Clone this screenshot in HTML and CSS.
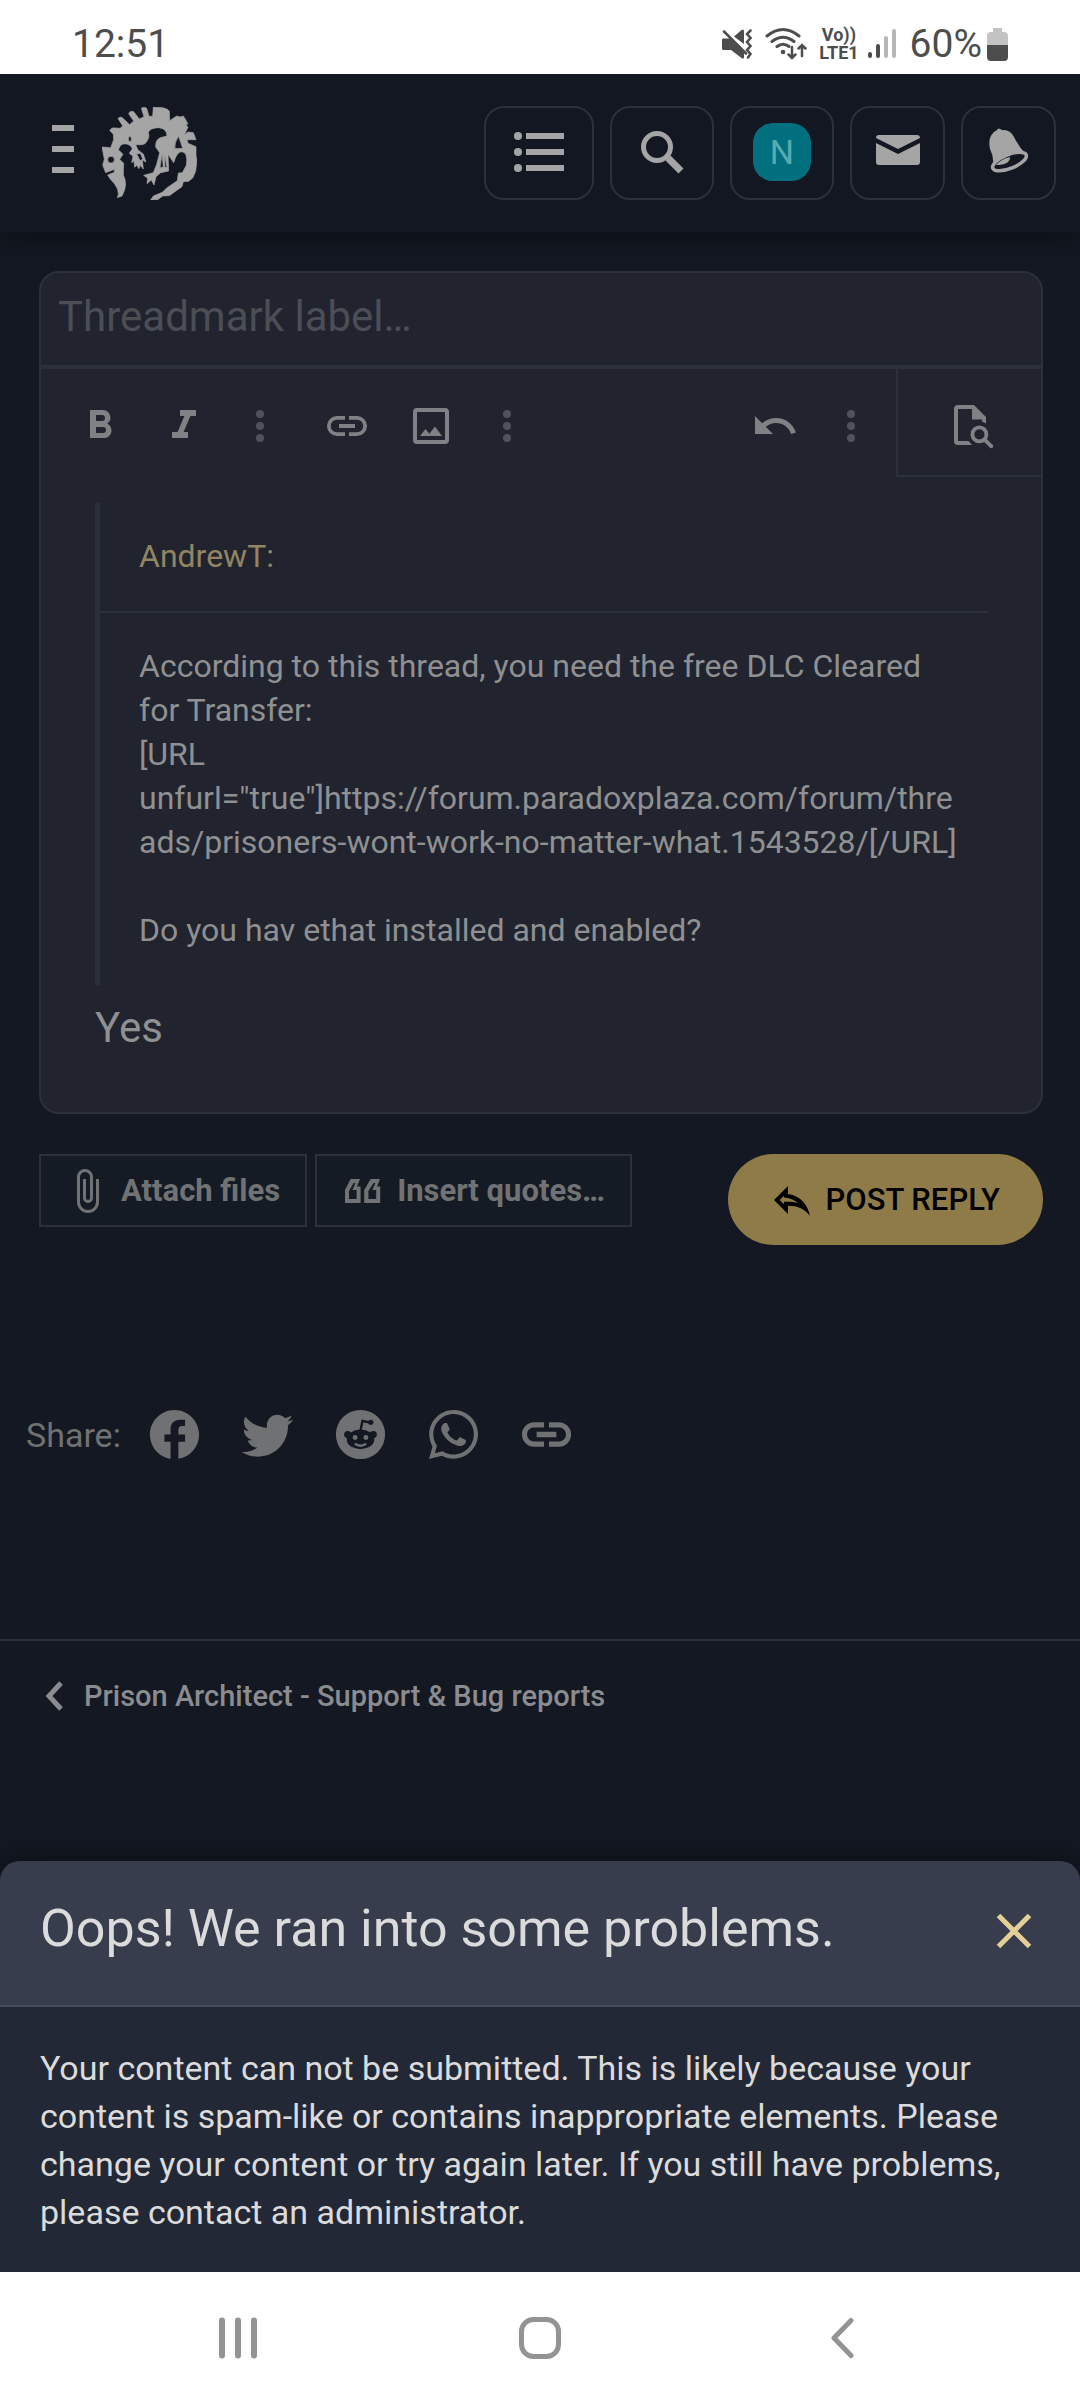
FILE: index.html
```html
<!DOCTYPE html>
<html lang="en">
<head>
<meta charset="utf-8">
<meta name="viewport" content="width=device-width">
<title>Prison Architect - Support &amp; Bug reports</title>
<link rel="stylesheet" href="styles.css">
</head>
<body>
<div class="statusbar">
  <span class="clock">12:51</span>
  <div class="status-icons">
    <svg class="si-mute" width="30" height="32" viewBox="0 0 30 32"><path fill="currentColor" d="M1 10.500H8L22 24V29Q22 32 19.500 30L9 22H1Q0 22 0 20V12Q0 10.500 1 10.500ZM12 8.500 19.500 2Q22 0.500 22 3V16Z"/><path d="M2 3.500 24 25.500M28.500 2.500 25 6 28.500 10 25 14 28.500 18 25 22 28.500 26 26 29.500" stroke="currentColor" fill="none" stroke-width="2.500" stroke-linecap="round"/></svg>
    <svg class="si-wifi" width="43" height="34" viewBox="0 0 43 34"><g fill="none" stroke="currentColor" stroke-width="3" stroke-linecap="round"><path d="M2 9Q18 -4 34 9M7 14.500Q18 6 29 14.500M12 19.500Q18 15 24 19.500"/><path d="M27 20V31M23.500 27.500 27 31 30.500 27.500M37 29V18M33.500 21.500 37 18 40.500 21.500" stroke-width="2.500"/></g><circle cx="18" cy="25" r="2.300" fill="currentColor"/></svg>
    <span class="lte"><span>Vo))</span><span>LTE1</span></span>
    <svg class="si-signal" width="28" height="30" viewBox="0 0 28 30"><g stroke="currentColor" stroke-width="4" stroke-linecap="round"><path d="M2 25V27M10 17V27"/><path d="M18 9V27M26 2V27" opacity=".4"/></g></svg>
    <span class="percent">60%</span>
    <svg class="si-battery" width="21" height="33" viewBox="0 0 21 33"><path d="M6 0H15V4H17Q21 4 21 8V17H0V8Q0 4 4 4H6Z" fill="#c3c3c3"/><path d="M0 17H21V29Q21 33 17 33H4Q0 33 0 29Z" fill="currentColor"/></svg>
  </div>
</div>

<header class="header">
  <button class="menu" aria-label="Menu"><svg width="22" height="48" viewBox="0 0 22 48"><path fill="currentColor" d="M0 0H22V6H0ZM0 21H22V27H0ZM0 42H22V48H0Z"/></svg></button>
  <a class="logo" href="#" aria-label="Home"><svg width="95" height="93" viewBox="36 33 285 279"><path fill="currentColor" fill-rule="evenodd" stroke="currentColor" stroke-width="2" stroke-linejoin="round" d="M190 33 218 35Q236 39 238 46L239 74 260 60 270 63 280 60 285 68 294 84 287 86 294 94 283 116 294 108 310 110 318 131 291 131 294 142 318 152V180L321 192 317 226 308 246 296 256 280 257 276 272 238 299 218 300 203 311 182 312 190 300 217 289 230 276 262 254 265 231 277 230 289 208Q295 166 273 167 260 169 251 200L234 175 236 225 212 230 198 242 192 267 184 252 171 263 173 247 161 238 190 230 200 205 209 170 197 153Q196 128 215 124L231 120Q230 96 205 95 178 96 175 110 181 126 165 143 155 148 137 146L144 162 160 174 168 198 157 192 160 219 150 208 147 218 140 208 134 214 132 195 125 200 129 181 118 172 127 158 122 150Q104 137 91 149L85 161 99 175 89 190 101 202 100 237Q115 265 96 300L82 305Q94 282 60 248L53 237 73 229 73 220 47 230 38 207 43 190 36 153 62 155 71 131 70 115 59 103Q65 93 76 96L91 97 98 89 84 68Q90 59 98 66L119 86 131 75 116 53Q120 43 131 47L148 69 162 62 154 37Q162 31 170 37L177 61 188 61ZM63 181A10 10 0 1 0 63 201A10 10 0 1 0 63 181ZM120 120Q113 123 116 134L122 138Q127 126 120 120ZM266 121 278 157 255 158Q252 140 266 121ZM140 174 151 172 158 188 151 195ZM216 174 220 213 210 215ZM224 176 231 215 225 214Z"/></svg></a>
  <nav class="tools">
    <button class="tool wide" aria-label="Navigation"><svg width="50" height="40" viewBox="0 0 50 40"><g fill="currentColor"><circle cx="4" cy="4" r="4"/><circle cx="4" cy="20" r="4"/><circle cx="4" cy="36" r="4"/><path d="M12 1H50V7H12ZM12 17H50V23H12ZM12 33H50V39H12Z"/></g></svg></button>
    <button class="tool mid" aria-label="Search"><svg width="44" height="44" viewBox="0 0 44 44"><g fill="none" stroke="currentColor"><circle cx="17" cy="17" r="13.500" stroke-width="5"/><path d="M28 28 41 41" stroke-width="7"/></g></svg></button>
    <button class="tool mid" aria-label="Account"><span class="avatar">N</span></button>
    <button class="tool" aria-label="Inbox"><svg width="44" height="30" viewBox="0 0 44 30"><path fill="currentColor" d="M0 3Q0 0 3 0H41Q44 0 44 3L22 14ZM0 8 22 19 44 8V27Q44 30 41 30H3Q0 30 0 27Z"/></svg></button>
    <button class="tool" aria-label="Alerts"><svg width="42" height="46" viewBox="0 0 42 46"><path fill="currentColor" d="M9 3Q10 0 14 3 22 2 26 10 31 20 37 26L24 28Q11 32 5 37 6 30 2 22-1 8 9 3Z"/><ellipse cx="21.500" cy="34.500" rx="18" ry="7" transform="rotate(-22 21.500 34.500)" fill="#131722" stroke="currentColor" stroke-width="3.500"/><path fill="currentColor" d="M8 38Q13 32 22 30 22 38 8 38Z"/></svg></button>
  </nav>
</header>

<main class="page">
  <form class="reply">
    <div class="editor">
      <input class="threadmark" type="text" placeholder="Threadmark label…" aria-label="Threadmark label">
      <div class="toolbar">
        <button type="button" class="tb" aria-label="Bold"><svg viewBox="0 0 24 24"><path d="M13.500 15.500H10V12.500H13.500A1.500 1.500 0 0 1 15 14A1.500 1.500 0 0 1 13.500 15.500M10 6.500H13A1.500 1.500 0 0 1 14.500 8A1.500 1.500 0 0 1 13 9.500H10M15.600 10.790C16.570 10.110 17.250 9 17.250 8C17.250 5.740 15.500 4 13.250 4H7V18H14.040C16.140 18 17.750 16.300 17.750 14.210C17.750 12.690 16.890 11.390 15.600 10.790Z"/></svg></button>
        <button type="button" class="tb" aria-label="Italic"><svg viewBox="0 0 24 24"><path d="M10 4V7H12.210L8.790 15H6V18H14V15H11.790L15.210 7H18V4Z"/></svg></button>
        <button type="button" class="tb more" aria-label="More text"><svg viewBox="0 0 24 24"><circle cx="12" cy="6" r="2"/><circle cx="12" cy="12" r="2"/><circle cx="12" cy="18" r="2"/></svg></button>
        <button type="button" class="tb group" aria-label="Insert link"><svg viewBox="0 0 24 24"><path d="M3.900 12C3.900 10.290 5.290 8.900 7 8.900H11V7H7A5 5 0 0 0 7 17H11V15.100H7C5.290 15.100 3.900 13.710 3.900 12M8 13H16V11H8V13M17 7H13V8.900H17C18.710 8.900 20.100 10.290 20.100 12S18.710 15.100 17 15.100H13V17H17A5 5 0 0 0 17 7Z"/></svg></button>
        <button type="button" class="tb" aria-label="Insert image"><svg viewBox="0 0 24 24"><path d="M19 19H5V5H19M19 3H5A2 2 0 0 0 3 5V19A2 2 0 0 0 5 21H19A2 2 0 0 0 21 19V5A2 2 0 0 0 19 3M13.960 12.290L11.210 15.830L9.250 13.470L6.500 17H17.500L13.960 12.290Z"/></svg></button>
        <button type="button" class="tb more" aria-label="More rich"><svg viewBox="0 0 24 24"><circle cx="12" cy="6" r="2"/><circle cx="12" cy="12" r="2"/><circle cx="12" cy="18" r="2"/></svg></button>
        <button type="button" class="tb undo" aria-label="Undo"><svg viewBox="0 0 24 24"><path d="M12.500 8C9.850 8 7.450 9 5.600 10.600L2 7V16H11L7.380 12.380C8.770 11.220 10.540 10.500 12.500 10.500C16.040 10.500 19.050 12.810 20.100 16L22.470 15.220C21.080 11.030 17.150 8 12.500 8Z"/></svg></button>
        <button type="button" class="tb more" aria-label="More misc"><svg viewBox="0 0 24 24"><circle cx="12" cy="6" r="2"/><circle cx="12" cy="12" r="2"/><circle cx="12" cy="18" r="2"/></svg></button>
        <button type="button" class="preview" aria-label="Preview"><svg viewBox="0 0 24 24"><path d="M6 2A2 2 0 0 0 4 4V20A2 2 0 0 0 6 22H13L11.300 20H6V4H13V9.200H18V10.200L20 11.200V8L14 2Z"/><circle cx="16.700" cy="16.700" r="3.500" fill="none" stroke="currentColor" stroke-width="1.900"/><path d="M19.300 19.300 22.600 22.600" stroke="currentColor" stroke-width="2" stroke-linecap="round"/></svg></button>
      </div>
      <div class="content" contenteditable="true">
        <blockquote class="quote">
          <div class="quote-title">AndrewT:</div>
          <div class="quote-body">According to this thread, you need the free DLC Cleared for Transfer:<br>[URL unfurl="true"]https://forum.paradoxplaza.com/forum/threads/prisoners-wont-work-no-matter-what.1543528/[/URL]<br><br>Do you hav ethat installed and enabled?</div>
        </blockquote>
        <p class="typed">Yes</p>
      </div>
    </div>
    <div class="actions">
      <button type="button" class="btn"><svg viewBox="0 0 24 24"><path d="M16.500 6V17.500A4 4 0 0 1 8.500 17.500V5A2.500 2.500 0 0 1 13.500 5V15.500A1 1 0 0 1 11.500 15.500V6H10V15.500A2.500 2.500 0 0 0 15 15.500V5A4 4 0 0 0 7 5V17.500A5.500 5.500 0 0 0 18 17.500V6Z"/></svg>Attach files</button>
      <button type="button" class="btn"><svg viewBox="0 0 24 24"><path fill-rule="evenodd" d="M5.800 6H10.500L9 9.800H10.800V18H3V11.500ZM7.300 8 5 12V16H8.800V11.500H6.700L8.200 8ZM15.800 6H20.500L19 9.800H20.600V18H12.600V11.500ZM17.300 8 14.700 12V16H18.600V11.500H16.700L18.200 8Z"/></svg>Insert quotes…</button>
      <button type="submit" class="post"><svg viewBox="0 0 24 24"><path fill-rule="evenodd" d="M10 5V9C17 10 20 15 21 20C18.500 16.500 15 14.900 10 14.900V19L3 12L10 5M8 9.830L5.830 12L8 14.170V12.900H10C11.800 12.900 13.400 13.100 14.900 13.600C13.500 12.200 11.600 11.300 9 10.900L8 10.700V9.830"/></svg>POST REPLY</button>
    </div>
  </form>

  <div class="share">
    <span class="share-label">Share:</span>
    <a href="#" aria-label="Facebook"><svg viewBox="0 0 24 24"><path d="M12 2C6.500 2 2 6.500 2 12C2 17 5.660 21.200 10.400 21.900V14.900H7.900V12H10.400V9.850C10.400 7.340 11.930 5.960 14.220 5.960H16.300V8.500H15.190C13.950 8.500 13.560 9.390 13.560 10.180V12H16.300V14.900H13.560V21.900A10 10 0 0 0 22 12C22 6.500 17.500 2 12 2Z"/></svg></a>
    <a href="#" aria-label="Twitter"><svg viewBox="0 0 24 24"><path d="M22.460 6C21.690 6.350 20.860 6.580 20 6.690C20.880 6.160 21.560 5.320 21.880 4.310C21.050 4.810 20.130 5.160 19.160 5.360C18.370 4.500 17.260 4 16 4C13.650 4 11.730 5.920 11.730 8.290C11.730 8.630 11.770 8.960 11.840 9.270C8.280 9.090 5.110 7.380 3 4.790C2.630 5.420 2.420 6.160 2.420 6.940C2.420 8.430 3.170 9.750 4.330 10.500C3.620 10.500 2.960 10.300 2.380 10C2.380 12.110 3.860 13.850 5.820 14.240C5.460 14.340 5.080 14.390 4.690 14.390C4.420 14.390 4.150 14.360 3.890 14.310C4.430 16 6 17.260 7.890 17.290C6.430 18.450 4.580 19.130 2.560 19.130C2.220 19.130 1.880 19.110 1.540 19.070C3.440 20.290 5.700 21 8.120 21C16 21 20.330 14.460 20.330 8.790C20.330 8.600 20.330 8.420 20.320 8.230C21.160 7.630 21.880 6.870 22.460 6Z"/></svg></a>
    <a href="#" aria-label="Reddit"><svg viewBox="0 0 24 24"><circle cx="12" cy="12" r="10"/><g class="cut"><ellipse cx="12" cy="14" rx="5.600" ry="4"/><circle cx="6.800" cy="12" r="1.450"/><circle cx="17.200" cy="12" r="1.450"/><circle cx="16.200" cy="7" r="1.050"/><path class="antenna" d="M12 10.500 12.800 6.500 16 7.100"/></g><circle cx="9.800" cy="13.200" r="1"/><circle cx="14.200" cy="13.200" r="1"/><path class="smile" d="M9.700 15.800Q12 17.300 14.300 15.800"/></svg></a>
    <a href="#" aria-label="WhatsApp"><svg viewBox="0 0 24 24"><path d="M12.040 2C6.580 2 2.130 6.450 2.130 11.910C2.130 13.660 2.590 15.360 3.450 16.860L2.050 22L7.300 20.620C8.750 21.410 10.380 21.830 12.040 21.830C17.500 21.830 21.950 17.380 21.950 11.920C21.950 9.270 20.920 6.780 19.050 4.910C17.180 3.030 14.690 2 12.040 2M12.050 3.670C14.250 3.670 16.310 4.530 17.870 6.090C19.420 7.650 20.280 9.720 20.280 11.920C20.280 16.460 16.580 20.150 12.040 20.150C10.560 20.150 9.110 19.760 7.850 19L7.550 18.830L4.430 19.650L5.260 16.610L5.060 16.290C4.240 15 3.800 13.470 3.800 11.910C3.810 7.370 7.500 3.670 12.050 3.670M8.530 7.330C8.370 7.330 8.100 7.390 7.870 7.640C7.650 7.890 7 8.500 7 9.710C7 10.930 7.890 12.100 8 12.270C8.140 12.440 9.760 14.940 12.250 16C12.840 16.270 13.300 16.420 13.660 16.530C14.250 16.720 14.790 16.690 15.220 16.630C15.700 16.560 16.680 16.030 16.890 15.450C17.100 14.870 17.100 14.380 17.040 14.270C16.970 14.170 16.810 14.110 16.560 14C16.310 13.860 15.090 13.260 14.870 13.180C14.640 13.100 14.500 13.060 14.310 13.300C14.150 13.550 13.670 14.110 13.530 14.270C13.380 14.440 13.240 14.460 13 14.340C12.740 14.210 11.940 13.950 11 13.110C10.260 12.450 9.770 11.640 9.620 11.390C9.500 11.150 9.610 11 9.730 10.890C9.840 10.780 10 10.600 10.100 10.450C10.230 10.310 10.270 10.200 10.350 10.040C10.430 9.870 10.390 9.730 10.330 9.610C10.270 9.500 9.770 8.260 9.560 7.770C9.360 7.290 9.160 7.350 9 7.340C8.860 7.340 8.700 7.330 8.530 7.330Z"/></svg></a>
    <a href="#" aria-label="Copy link"><svg viewBox="0 0 24 24"><path d="M4.100 12C4.100 10.300 5.400 9.200 7 9.200H11V7H7A5 5 0 0 0 7 17H11V14.800H7C5.400 14.800 4.100 13.700 4.100 12M8 13.100H16V10.900H8ZM17 7H13V9.200H17C18.600 9.200 19.900 10.300 19.900 12S18.600 14.800 17 14.800H13V17H17A5 5 0 0 0 17 7Z"/></svg></a>
  </div>

  <nav class="crumbs">
    <a href="#"><svg width="18" height="30" viewBox="0 0 18 30"><path d="M16 2 4 15 16 28" fill="none" stroke="currentColor" stroke-width="5"/></svg>Prison Architect - Support &amp; Bug reports</a>
  </nav>
</main>

<section class="dialog" role="alertdialog" aria-labelledby="dialog-title">
  <div class="dialog-head">
    <h2 id="dialog-title">Oops! We ran into some problems.</h2>
    <button class="close" aria-label="Close"><svg width="36" height="36" viewBox="0 0 36 36"><path d="M2.500 2.500 33.500 33.500M33.500 2.500 2.500 33.500" stroke="currentColor" stroke-width="5"/></svg></button>
  </div>
  <p class="dialog-text">Your content can not be submitted. This is likely because your content is spam-like or contains inappropriate elements. Please change your content or try again later. If you still have problems, please contact an administrator.</p>
</section>

<nav class="navbar">
  <button aria-label="Recents"><svg width="38" height="42" viewBox="0 0 38 42"><path d="M3 3.500V38.500M19 3.500V38.500M35 3.500V38.500" stroke="currentColor" stroke-width="6" stroke-linecap="round"/></svg></button>
  <button aria-label="Home"><svg width="42" height="42" viewBox="0 0 42 42"><rect x="2.500" y="2.500" width="37" height="37" rx="12" fill="none" stroke="currentColor" stroke-width="5"/></svg></button>
  <button aria-label="Back"><svg width="42" height="42" viewBox="0 0 42 42"><path d="M28 3.500 11 21 28 38.500" fill="none" stroke="currentColor" stroke-width="5" stroke-linecap="round" stroke-linejoin="round"/></svg></button>
</nav>
</body>
</html>
```

FILE: styles.css
```css
* { box-sizing: border-box; }

body {
  margin: 0;
  min-height: 100vh;
  display: flex;
  flex-direction: column;
  background: #131822;
  font-family: Roboto, "Liberation Sans", sans-serif;
  font-size: 32px;
}

button {
  margin: 0;
  padding: 0;
  border: 0;
  background: none;
  color: inherit;
  font: inherit;
}

svg { display: block; flex: none; }
a { color: inherit; text-decoration: none; }

/* Phone status bar */
.statusbar {
  position: relative;
  z-index: 1;
  display: flex;
  justify-content: space-between;
  align-items: center;
  height: 74px;
  padding: 14px 72px 0;
  background: #fff;
  color: #4d4d4d;
  font-size: 39px;
}

.status-icons { display: flex; align-items: center; }
.si-wifi { margin: 0 11px 0 13px; }

.lte {
  display: flex;
  flex-direction: column;
  align-items: center;
  margin-right: 9px;
  font-size: 18px;
  font-weight: 700;
  line-height: 18px;
}

.si-signal { margin-right: 14px; }
.si-battery { margin-left: 5px; }

/* Site header */
.header {
  position: relative;
  display: flex;
  align-items: center;
  height: 158px;
  padding: 0 24px 0 52px;
  background: #131722;
  color: #a5a5a5;
  box-shadow: 0 8px 30px rgba(0, 0, 0, .35);
}

.menu { padding-bottom: 8px; }
.logo { margin-left: 28px; }

.tools {
  display: flex;
  gap: 16px;
  margin-left: auto;
}

.tool {
  display: flex;
  align-items: center;
  justify-content: center;
  width: 95px;
  height: 94px;
  padding-bottom: 6px;
  border: 2px solid #2c303c;
  border-radius: 20px;
}

.tool.wide { width: 110px; padding-bottom: 2px; }
.tool.mid { width: 104px; padding-bottom: 2px; }

.avatar {
  width: 58px;
  height: 58px;
  border-radius: 20px;
  background: #026f7e;
  color: #57aab0;
  font-size: 34px;
  line-height: 58px;
  text-align: center;
}

/* Reply form */
.page { flex: 1; }
.reply { padding: 39px 37px 0 39px; }

.editor {
  border: 2px solid #2c303c;
  border-radius: 20px;
  background: #21242e;
  color: #8f9092;
  overflow: hidden;
}

.threadmark {
  display: block;
  width: 100%;
  height: 96px;
  padding: 0 17px 6px;
  border: 0;
  border-bottom: 4px solid #2c303c;
  background: none;
  color: #8f9092;
  font: 42px Roboto, "Liberation Sans", sans-serif;
}

.threadmark::placeholder { color: #4b4e55; opacity: 1; }

.toolbar {
  display: flex;
  height: 108px;
  padding-left: 17px;
  color: #808184;
}

.toolbar svg { width: 48px; height: 48px; fill: currentColor; }

.tb {
  display: flex;
  align-items: center;
  justify-content: center;
  width: 84px;
  padding-top: 6px;
}

.tb.more { width: 68px; color: #505259; }
.tb.group { margin-left: 11px; }
.tb.undo { margin-left: auto; }

.preview {
  display: flex;
  align-items: center;
  justify-content: center;
  width: 145px;
  margin-left: 11px;
  padding-top: 6px;
  border: solid #2c303c;
  border-width: 0 0 2px 2px;
}

.content { padding: 26px 53px 55px 54px; outline: 0; }

.quote {
  margin: 0 0 14px;
  border-left: 5px solid #2b2e3c;
  font-size: 32px;
  line-height: 44px;
}

.quote-title {
  padding: 31px 39px 33px;
  border-bottom: 2px solid #2c303c;
  color: #918562;
}

.quote-body { padding: 31px 24px 33px 39px; overflow-wrap: break-word; }

.typed { margin: 0; font-size: 42px; line-height: 58px; }

.actions {
  display: flex;
  align-items: flex-start;
  gap: 8px;
  margin-top: 40px;
}

.actions svg { width: 48px; height: 48px; fill: currentColor; }

.btn {
  display: flex;
  align-items: center;
  gap: 10px;
  height: 73px;
  padding: 0 25px 0 22px;
  border: 2px solid #2c303c;
  background: #151b24;
  color: #717274;
  font-size: 31px;
  font-weight: 700;
}

.post {
  display: flex;
  align-items: center;
  gap: 10px;
  height: 91px;
  margin-left: auto;
  padding: 0 43px 0 40px;
  border-radius: 46px;
  background: #8f7b48;
  color: #000;
  font-size: 31px;
  font-weight: 500;
}

/* Share links */
.share {
  display: flex;
  align-items: center;
  gap: 34px;
  margin-top: 160px;
  padding-left: 26px;
  color: #707172;
  font-size: 34px;
}

.share-label { margin-right: -10px; }
.share svg { width: 59px; height: 59px; fill: currentColor; }
.share .cut { fill: #131822; }
.share .antenna { fill: none; stroke: #131822; stroke-width: 1; }
.share .smile { fill: none; stroke: currentColor; stroke-width: 1; }

/* Breadcrumb */
.crumbs {
  margin-top: 175px;
  padding: 33px 45px;
  border-top: 2px solid #2c303c;
  color: #8b8c8f;
  font-size: 29px;
  font-weight: 500;
  line-height: 44px;
}

.crumbs a { display: flex; align-items: center; gap: 21px; }

/* Error dialog */
.dialog {
  border-radius: 20px 20px 0 0;
  background: #222835;
  color: #dbdbdc;
  box-shadow: 0 0 36px rgba(0, 0, 0, .4);
  overflow: hidden;
}

.dialog-head {
  display: flex;
  align-items: center;
  justify-content: space-between;
  height: 146px;
  padding: 0 48px 10px 40px;
  border-bottom: 2px solid #444a5d;
  background: #383d4e;
}

.dialog-head h2 { margin: 0; font-size: 52px; font-weight: 400; }
.close { padding-top: 6px; color: #e4cf97; }

.dialog-text {
  margin: 0;
  padding: 37px 38px 36px 40px;
  font-size: 34px;
  line-height: 48px;
}

/* Phone navigation bar */
.navbar {
  position: relative;
  display: flex;
  align-items: center;
  justify-content: space-around;
  height: 128px;
  padding: 4px 84px 0 88px;
  background: #fff;
  color: #939393;
}
```
